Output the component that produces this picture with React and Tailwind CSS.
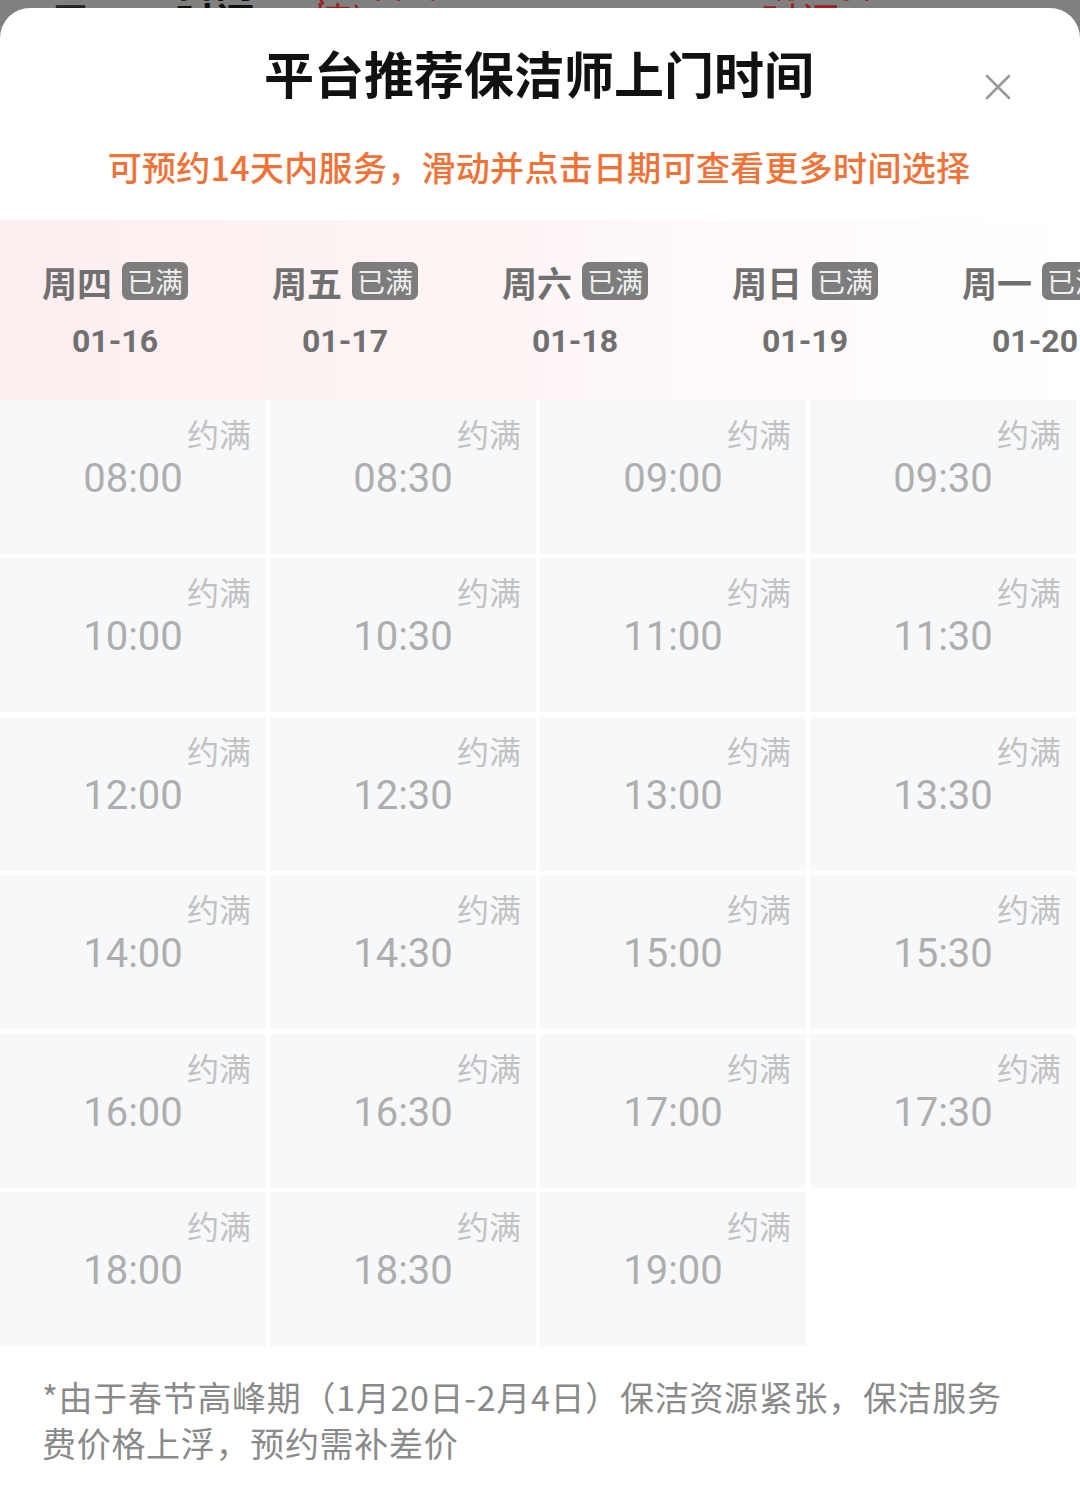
import React from "react";

const days = [
  { w: "周四", d: "01-16" },
  { w: "周五", d: "01-17" },
  { w: "周六", d: "01-18" },
  { w: "周日", d: "01-19" },
  { w: "周一", d: "01-20" },
];

const times = [
  "08:00", "08:30", "09:00", "09:30",
  "10:00", "10:30", "11:00", "11:30",
  "12:00", "12:30", "13:00", "13:30",
  "14:00", "14:30", "15:00", "15:30",
  "16:00", "16:30", "17:00", "17:30",
  "18:00", "18:30", "19:00",
];

const cjk = { fontFamily: '"Noto Sans CJK SC", "Noto Sans", sans-serif' };
const num = { fontFamily: 'Roboto, "Noto Sans CJK SC", sans-serif' };

export default function App() {
  return (
    <div className="w-[1080px] h-[1496px] bg-[#808080] overflow-hidden" style={cjk}>
      <div className="h-[8px] overflow-hidden flex items-end">
        <div className="flex items-end w-full mb-[-32px] text-[40px] leading-[40px]">
          <span className="ml-[50px] text-[#222]">周</span>
          <span className="ml-[85px] text-[#111] font-bold">日门时间</span>
          <span className="ml-[20px] text-[#a02020]">(查看详情)</span>
          <span className="ml-[310px] text-[#a02020]">请选择时间</span>
          <span className="ml-[150px] text-[#222]">&lt;</span>
        </div>
      </div>
      <div className="bg-white rounded-t-[30px] h-[1488px] flex flex-col">
        <div className="relative h-[136px] flex items-center justify-center">
          <h1 className="text-[50px] font-bold text-[#111] leading-none mt-[-8px] ml-[-2px]">平台推荐保洁师上门时间</h1>
          <div className="absolute left-[984px] top-[65px] w-[28px] h-[28px]">
            <svg viewBox="0 0 28 28" width="28" height="28">
              <path d="M3 3 L25 25 M25 3 L3 25" stroke="#9a9a9a" strokeWidth="2.6" strokeLinecap="round" />
            </svg>
          </div>
        </div>
        <div className="h-[76px] flex items-start justify-center">
          <p className="text-[34px] font-medium tracking-[0.3px] leading-none text-[#f07236] mt-[6px] ml-[-2px]">可预约14天内服务，滑动并点击日期可查看更多时间选择</p>
        </div>
        <div className="h-[180px] flex overflow-hidden bg-gradient-to-r from-[#fdeef0] via-[#fef6f6] to-white">
          {days.map((x) => (
            <div key={x.d} className="w-[230px] shrink-0 flex flex-col items-center pt-[42px]">
              <div className="flex items-center gap-[10px]">
                <span className="text-[35px] font-bold text-[#707070] leading-none">{x.w}</span>
                <span className="h-[38px] px-[5px] rounded-[7px] bg-[#7d7d7d] text-[#efefef] text-[28px] leading-[38px]">已满</span>
              </div>
              <div className="mt-[25px] text-[32px] font-bold text-[#707070] leading-none" style={num}>{x.d}</div>
            </div>
          ))}
        </div>
        <div className="grid grid-cols-4 w-[1076px] gap-x-[4px] gap-y-[4.4px]">
          {times.map((t) => (
            <div key={t} className="h-[154px] bg-[#f7f8fa] flex flex-col">
              <span className="self-end pr-[15px] pt-[17px] text-[32px] leading-none text-[#c2c2c2]">约满</span>
              <span className="mt-[10px] text-center text-[40px] leading-none text-[#aeaeae]" style={num}>{t}</span>
            </div>
          ))}
        </div>
        <p className="w-[1010px] pl-[42px] pt-[28px] text-[34px] tracking-[0.7px] leading-[46px] text-[#8a8a8a]">
          *由于春节高峰期（1月20日-2月4日）保洁资源紧张，保洁服务费价格上浮，预约需补差价
        </p>
      </div>
    </div>
  );
}
